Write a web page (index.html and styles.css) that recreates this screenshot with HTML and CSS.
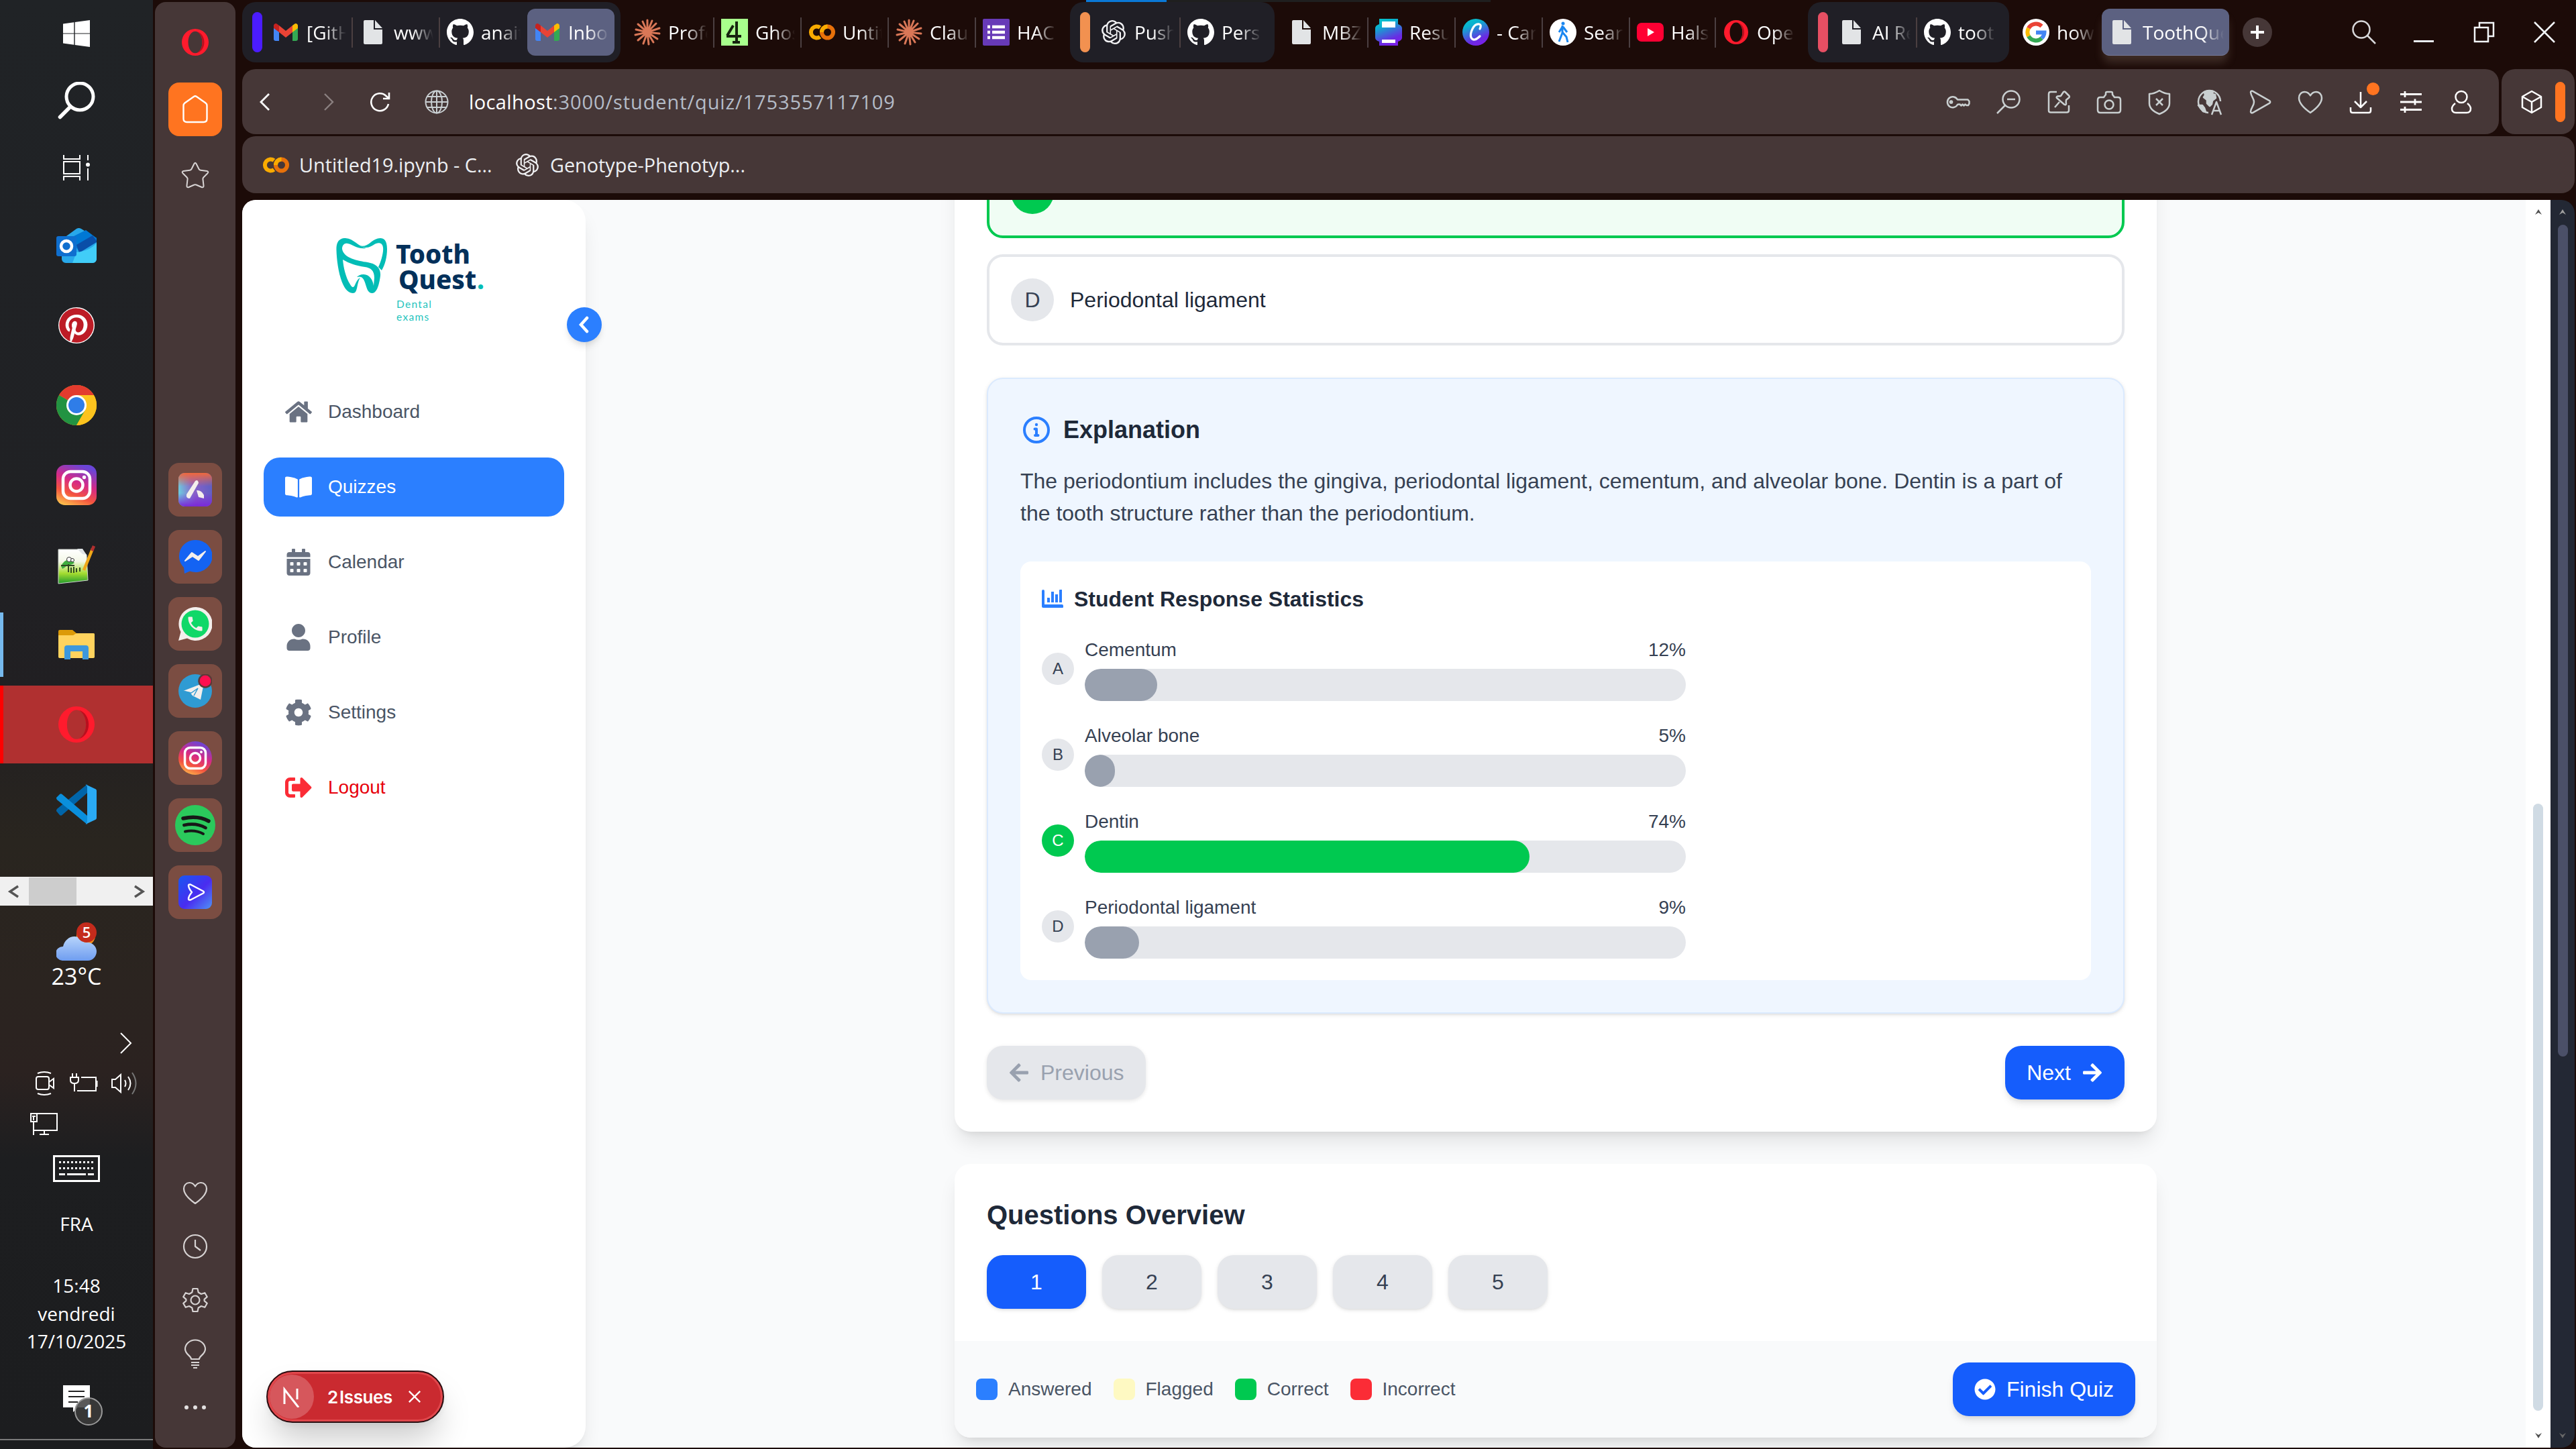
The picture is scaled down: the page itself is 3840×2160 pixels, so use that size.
FILE: index.html
```html
<!DOCTYPE html>
<html lang="en">
<head>
<meta charset="utf-8">
<title>ToothQuest</title>
<link rel="stylesheet" href="styles.css">
</head>
<body>
<svg class="defs" width="0" height="0">
  <defs>
    <linearGradient id="ig" x1="0.2" y1="1" x2="0.6" y2="0"><stop offset="0" stop-color="#fdc04c"/><stop offset=".3" stop-color="#f4543f"/><stop offset=".6" stop-color="#d62a86"/><stop offset="1" stop-color="#6a45d8"/></linearGradient>
    <linearGradient id="canva" x1=".2" y1="0" x2=".6" y2="1"><stop offset="0" stop-color="#05c3cc"/><stop offset=".25" stop-color="#0bb0cf"/><stop offset=".8" stop-color="#6a2ae4"/><stop offset="1" stop-color="#7a20e8"/></linearGradient>
    <linearGradient id="aria" x1="0" y1=".6" x2="1" y2=".4"><stop offset="0" stop-color="#6cd0e0"/><stop offset=".45" stop-color="#8a62c8"/><stop offset="1" stop-color="#5f5fc4"/></linearGradient>
    <linearGradient id="ariatop" x1=".5" y1="0" x2=".5" y2="1"><stop offset="0" stop-color="#f0683c"/><stop offset=".4" stop-color="#f0683c" stop-opacity="0"/><stop offset=".6" stop-color="#7a28d8" stop-opacity="0"/><stop offset="1" stop-color="#7a28d8"/></linearGradient>
    <linearGradient id="flow" x1="0" y1="0" x2="1" y2="1"><stop offset="0" stop-color="#1758f2"/><stop offset=".55" stop-color="#4a2cf0"/><stop offset="1" stop-color="#4f93f5"/></linearGradient>
    <linearGradient id="cloud" x1="0" y1="0" x2="0" y2="1"><stop offset="0" stop-color="#b7d4fb"/><stop offset="1" stop-color="#6f9df0"/></linearGradient>
    <linearGradient id="npp" x1="0" y1="0" x2="0" y2="1"><stop offset="0" stop-color="#fff"/><stop offset=".35" stop-color="#f4f8e8"/><stop offset=".7" stop-color="#a4dc30"/><stop offset="1" stop-color="#1f9a2c"/></linearGradient>
    <symbol id="gmail" viewBox="0 0 40 40"><path d="M2 9v21a3 3 0 0 0 3 3h5V17z" fill="#4285f4"/><path d="M38 9v21a3 3 0 0 1-3 3h-5V17z" fill="#34a853"/><path d="M30 10l3-2.3c2-1.5 5 0 5 2.600V14l-8 6z" fill="#fbbc04"/><path d="M10 20V10l10 8 10-8v10l-10 8z" fill="#ea4335"/><path d="M2 14v-3.700c0-2.600 3-4.100 5-2.600L10 10v10z" fill="#c5221f"/></symbol>
    <symbol id="doc" viewBox="0 0 40 40"><path d="M8 2h13v14h13v20a2 2 0 0 1-2 2H8a2 2 0 0 1-2-2V4a2 2 0 0 1 2-2z" fill="#e2e4e6"/><path d="M23 2l11 12H23z" fill="#e2e4e6"/></symbol>
    <symbol id="github" viewBox="0 0 16 16"><path fill="#fff" d="M8 0C3.580 0 0 3.580 0 8c0 3.540 2.290 6.530 5.470 7.590.4.070.55-.17.55-.38 0-.19-.01-.82-.01-1.490-2.010.37-2.530-.49-2.690-.94-.09-.23-.48-.94-.82-1.130-.28-.15-.68-.52-.01-.53.63-.01 1.080.58 1.230.82.72 1.210 1.870.87 2.330.66.07-.52.28-.87.51-1.070-1.780-.2-3.640-.89-3.640-3.950 0-.87.31-1.590.82-2.150-.08-.2-.36-1.020.08-2.120 0 0 .67-.21 2.200.82.64-.18 1.320-.27 2-.27.68 0 1.360.09 2 .27 1.530-1.040 2.200-.82 2.200-.82.44 1.100.16 1.920.08 2.120.51.56.82 1.270.82 2.150 0 3.070-1.870 3.750-3.650 3.950.29.25.54.73.54 1.480 0 1.070-.01 1.930-.01 2.200 0 .21.15.46.55.38A8.013 8.013 0 0 0 16 8c0-4.420-3.580-8-8-8z"/></symbol>
    <symbol id="claude" viewBox="-20 -20 40 40"><g stroke="#d97757" stroke-width="3" stroke-linecap="round"><path d="M0 0V-18M0 0L7-17M0 0L13-13M0 0L18-6M0 0L18 2M0 0L15 10M0 0L9 15M0 0L2 18M0 0L-6 17M0 0L-14 12M0 0L-18 4M0 0L-17-4M0 0L-14-12M0 0L-7-16"/></g></symbol>
    <symbol id="colab" viewBox="0 0 40 40"><circle cx="28.500" cy="20" r="8.500" fill="none" stroke="#e8710a" stroke-width="6"/><path d="M17.500 13.200A8.500 8.500 0 1 0 17.500 26.800" fill="none" stroke="#f9ab00" stroke-width="6"/><path d="M20 20a8.500 8.500 0 0 1 8.500-8.500" fill="none" stroke="#f9ab00" stroke-width="6"/></symbol>
    <symbol id="openai" viewBox="0 0 24 24"><path fill="#f1f1f3" d="M22.282 9.821a5.985 5.985 0 0 0-.516-4.911 6.046 6.046 0 0 0-6.510-2.900A6.065 6.065 0 0 0 4.981 4.182a5.985 5.985 0 0 0-3.998 2.900 6.046 6.046 0 0 0 .743 7.097 5.980 5.980 0 0 0 .511 4.911 6.051 6.051 0 0 0 6.515 2.900A5.985 5.985 0 0 0 13.260 24a6.056 6.056 0 0 0 5.772-4.206 5.989 5.989 0 0 0 3.998-2.900 6.056 6.056 0 0 0-.748-7.073zm-9.022 12.608a4.476 4.476 0 0 1-2.876-1.041l.142-.080 4.778-2.758a.795.795 0 0 0 .393-.681v-6.737l2.020 1.169a.071.071 0 0 1 .038.052v5.583a4.504 4.504 0 0 1-4.495 4.494zm-9.661-4.125a4.471 4.471 0 0 1-.535-3.014l.142.085 4.783 2.758a.771.771 0 0 0 .781 0l5.843-3.369v2.332a.080.080 0 0 1-.033.062L9.740 19.950a4.499 4.499 0 0 1-6.141-1.646zM2.341 7.896a4.485 4.485 0 0 1 2.366-1.973V11.600a.766.766 0 0 0 .388.677l5.814 3.354-2.020 1.169a.076.076 0 0 1-.071 0l-4.830-2.787A4.504 4.504 0 0 1 2.341 7.872zm16.596 3.856L13.104 8.364 15.119 7.200a.076.076 0 0 1 .071 0l4.830 2.791a4.494 4.494 0 0 1-.677 8.104v-5.677a.790.790 0 0 0-.407-.667zm2.011-3.023l-.142-.085-4.774-2.782a.776.776 0 0 0-.785 0L9.409 9.230V6.897a.066.066 0 0 1 .028-.062l4.830-2.787a4.499 4.499 0 0 1 6.680 4.660zM8.307 12.863l-2.020-1.164a.080.080 0 0 1-.038-.057V6.074a4.499 4.499 0 0 1 7.376-3.454l-.142.081L8.704 5.459a.795.795 0 0 0-.393.681zm1.098-2.365l2.602-1.500 2.607 1.500v2.999l-2.597 1.500-2.607-1.500Z"/></symbol>
    <symbol id="opera" viewBox="0 0 40 40"><path fill="#ff1b2d" fill-rule="evenodd" d="M20 0a20 20 0 1 0 0 40a20 20 0 1 0 0-40zM20 3.800c6 0 10.500 7 10.500 16.200S26 36.200 20 36.200 9.500 29.200 9.500 20 14 3.800 20 3.800z"/><path d="M23 4.300c6 1.500 10.500 7.900 10.500 15.700s-4.500 14.200-10.500 15.700c4.500-3 7.500-8.900 7.500-15.700S27.500 7.300 23 4.300z" fill="#b8101e"/></symbol>
    <symbol id="heart" viewBox="0 0 40 40"><path d="M20 36C10 29 3 22 3 14c0-5 3.500-9 8.500-9 3.500 0 6.500 2 8.500 5.500C22 7 25 5 28.500 5c5 0 8.500 4 8.500 9 0 8-7 15-17 22z"/></symbol>
    <symbol id="send" viewBox="0 0 40 40"><path d="M6 5.500c0-1.500 1.500-2.300 3-1.600L34 18.200c1.600.9 1.600 2.700 0 3.600L9 36.100c-1.500.7-3-.1-3-1.600.500-6 5-9 5-14.500S6.500 11.500 6 5.500z"/></symbol>
    <symbol id="arrow" viewBox="0 0 448 512"><path fill="currentColor" d="M257.500 445.100l-22.200 22.200c-9.400 9.400-24.600 9.400-33.900 0L7 273c-9.400-9.400-9.400-24.600 0-33.900L201.400 44.700c9.400-9.400 24.600-9.400 33.900 0l22.200 22.200c9.500 9.500 9.300 25-.4 34.300L136.600 216H424c13.300 0 24 10.700 24 24v32c0 13.300-10.700 24-24 24H136.600l120.500 114.800c9.800 9.300 10 24.800.4 34.300z"/></symbol>
  </defs>
</svg>

<aside class="taskbar">
  <div class="slot sys"><svg width="40" height="40" viewBox="0 0 40 40" fill="#fff"><path d="M0 5.500L16.300 3.200v16.200H0zM17.700 3L40 0v19.400H17.700zM0 20.600h16.300v16.200L0 34.500zM17.700 20.600H40V40l-22.300-3z"/></svg></div>
  <div class="slot sys"><svg width="56" height="56" viewBox="0 0 56 56" fill="none" stroke="#fff" stroke-linecap="round"><circle cx="33" cy="22" r="20" stroke-width="5"/><path d="M19 37L3.500 52.500" stroke-width="5.500"/></svg></div>
  <div class="slot sys"><svg width="40" height="40" viewBox="0 0 40 40" fill="none" stroke="#fff" stroke-width="2"><path d="M1 1v6h24V1M1 11h24v18H1zM1 39v-6h24v6M37 1v8M37 21v18"/><circle cx="37" cy="15.500" r="3" fill="#fff" stroke="none"/></svg></div>
  <div class="slot first"><svg width="60" height="54" viewBox="0 0 60 54"><path d="M8 18L30 2c2-1.500 5-1.500 7 0l23 14v31a6 6 0 0 1-6 6H14a6 6 0 0 1-6-6z" fill="#28a8ea"/><path d="M20 16L44 4l16 12v4L34 36z" fill="#0078d4"/><path d="M30 26l24-14 6 8v2L34 38z" fill="#0a4ea8"/><path d="M30 37c12-1 24-6 30-14v24a6 6 0 0 1-6 6H24z" fill="#41cdf8"/><rect x="0" y="13" width="30" height="30" rx="3" fill="#0f6fcf"/><circle cx="15" cy="28" r="8" fill="none" stroke="#fff" stroke-width="4.500"/></svg></div>
  <div class="slot"><svg width="54" height="54" viewBox="0 0 24 24"><circle cx="12" cy="12" r="12" fill="#fff"/><path transform="translate(.6 .6) scale(.95)" fill="#bd1c26" d="M12.017 0C5.396 0 .029 5.367.029 11.987c0 5.079 3.158 9.417 7.618 11.162-.105-.949-.199-2.403.041-3.439.219-.937 1.406-5.957 1.406-5.957s-.359-.72-.359-1.781c0-1.663.967-2.911 2.168-2.911 1.024 0 1.518.769 1.518 1.688 0 1.029-.653 2.567-.992 3.992-.285 1.193.6 2.165 1.775 2.165 2.128 0 3.768-2.245 3.768-5.487 0-2.861-2.063-4.869-5.008-4.869-3.410 0-5.409 2.562-5.409 5.199 0 1.033.394 2.143.889 2.741.099.12.112.225.085.345-.09.375-.293 1.199-.334 1.363-.053.225-.172.271-.401.165-1.495-.69-2.433-2.878-2.433-4.646 0-3.776 2.748-7.252 7.920-7.252 4.158 0 7.392 2.967 7.392 6.923 0 4.135-2.607 7.462-6.233 7.462-1.214 0-2.354-.629-2.758-1.379l-.749 2.848c-.269 1.045-1.004 2.352-1.498 3.146 1.123.345 2.306.535 3.550.535 6.607 0 11.985-5.365 11.985-11.987C23.970 5.390 18.592.026 11.985.026z"/></svg></div>
  <div class="slot"><svg width="60" height="60" viewBox="0 0 60 60"><circle cx="30" cy="30" r="30" fill="#fbbc05"/><path d="M30 30L4 15A30 30 0 0 1 56 15z" fill="#e33b2e"/><path d="M4 15A30 30 0 0 0 30 60L43 37.500 30 30z" fill="#229342"/><path d="M43 37.500L30 60A30 30 0 0 0 56 15H30z" fill="#fcc31e"/><circle cx="30" cy="30" r="15" fill="#fff"/><circle cx="30" cy="30" r="12" fill="#2f7de8"/></svg></div>
  <div class="slot"><svg width="60" height="60" viewBox="0 0 60 60"><rect width="60" height="60" rx="13" fill="url(#ig)"/><g fill="none" stroke="#fff" stroke-width="4.500"><rect x="10" y="10" width="40" height="40" rx="11"/><circle cx="30" cy="30" r="9.500"/></g><circle cx="41.500" cy="18.500" r="2.700" fill="#fff"/></svg></div>
  <div class="slot"><svg width="56" height="58" viewBox="0 0 56 58"><path d="M1 6h34l8 8 2 38-44 5z" fill="url(#npp)" stroke="#cfd6cf"/><path d="M29 5l8 8 6 1-6-9z" fill="#dfe3e6"/><path d="M5 31q5-11 14-9 4 1 6 4-6 4-10 3-4 4-8 6" fill="#3fae3f"/><circle cx="17" cy="21" r="3.500" fill="#fff" stroke="#333"/><circle cx="22" cy="22" r="2.500" fill="#fff" stroke="#333"/><path d="M5 30h20M16 28v12M20 33v8M24 32v9M28 34v6M33 33v6" stroke="#2f4a22" stroke-width="2"/><path d="M39 37L52 5" stroke="#f0a818" stroke-width="4.500"/><path d="M51 8l3-7" stroke="#b03030" stroke-width="4.500"/></svg></div>
  <div class="slot explorer"><svg width="54" height="46" viewBox="0 0 54 46"><path d="M2 1h19l6 5h25a2 2 0 0 1 2 2v34H0V3a2 2 0 0 1 2-2z" fill="#dc9a08"/><path d="M0 9h22l5-3h25a2 2 0 0 1 2 2v33a2 2 0 0 1-2 2H2a2 2 0 0 1-2-2z" fill="#ffd35e"/><path d="M9 45V28a4 4 0 0 1 4-4h28a4 4 0 0 1 4 4v17h-9V33H18v12z" fill="#3d98dd"/></svg></div>
  <div class="slot opera"><svg width="54" height="54"><use href="#opera"/></svg></div>
  <div class="slot"><svg width="60" height="60" viewBox="0 0 60 60"><path d="M0 40l5 6c1 1 2.500 1 3.500 0L46 13V0L2 36c-2 1.500-2 3-2 4z" fill="#0065a9"/><path d="M0 20l5-5c1-1 2.500-1 3.500 0L46 47v13L2 24c-2-1.500-2-3-2-4z" fill="#0a8fdc"/><path d="M43 0l15 7c1.500.700 2 1.500 2 3v40c0 1.500-.500 2.300-2 3l-15 7c2-1 3-3 3-5V5c0-2-1-4-3-5z" fill="#2aaaf4"/></svg></div>
  <div class="hscroll">
    <svg class="hs-l" width="18" height="20" viewBox="0 0 18 20"><path d="M17 2L5 10l12 8" fill="none" stroke="#555" stroke-width="3.500"/></svg>
    <div class="hs-thumb"></div>
    <svg class="hs-r" width="18" height="20" viewBox="0 0 18 20"><path d="M1 2l12 8-12 8" fill="none" stroke="#555" stroke-width="3.500"/></svg>
  </div>
  <div class="weather">
    <svg width="60" height="58" viewBox="0 0 60 58"><circle cx="44" cy="20" r="14" fill="#f28a1a"/><path d="M9 57a10.500 10.500 0 0 1 1-21c2-9 9-15 17-15 7 0 12 4 15 9 10-2 18 5 18 13 0 8-6 14-13 14z" fill="url(#cloud)"/></svg>
    <span class="w-badge">5</span>
  </div>
  <div class="temp">23°C</div>
  <div class="chev"><svg width="20" height="34" viewBox="0 0 20 34" fill="none" stroke="#fff" stroke-width="2"><path d="M2 2l15 15L2 32"/></svg></div>
  <div class="tray">
    <svg width="30" height="36" viewBox="0 0 30 36" fill="none" stroke="#fff" stroke-width="2"><path d="M4 3q10-4 20 0M4 33q10 4 20 0"/><rect x="2" y="8" width="19" height="19" rx="3"/><path d="M21 16l7-5v14l-7-5"/></svg>
    <svg width="42" height="32" viewBox="0 0 42 32" fill="none" stroke="#fff" stroke-width="2"><path d="M17 7h22v20H11M4 1v5M10 1v5M1 7h12v4q0 5-6 5t-6-5zM7 16v12"/><path d="M40 12v9" stroke-width="3"/></svg>
    <svg width="42" height="38" viewBox="0 0 42 38" fill="none" stroke="#fff" stroke-width="2"><path d="M2 13h5l8-7v26l-8-7H2zM21 14q3 5 0 10M26 9q7 10 0 20"/><path d="M32 3q11 16 0 32" stroke="#777"/></svg>
  </div>
  <div class="tray2"><svg width="42" height="34" viewBox="0 0 42 34" fill="none" stroke="#fff" stroke-width="2"><path d="M10 1h30v25H6M1 1h9v12H1zM3 5h5M5 5v6M5 13v20M21 26v6M14 32h14"/></svg></div>
  <div class="kbd"><svg width="70" height="40" viewBox="0 0 70 40" fill="none" stroke="#fff" stroke-width="3"><rect x="1.500" y="1.500" width="67" height="37"/><path d="M9 10.500h52M9 19.500h52" stroke-dasharray="3 3"/><path d="M9 28.500h9M21 28.500h28M52 28.500h9"/></svg></div>
  <div class="lang">FRA</div>
  <div class="clock">15:48<br>vendredi<br>17/10/2025</div>
  <div class="notif">
    <svg width="40" height="40" viewBox="0 0 40 40"><path d="M0 0h40v33H22l-7 7v-7H0z" fill="#fff"/><path d="M8 9h24M8 17h24M8 25h14" stroke="#222" stroke-width="2"/></svg>
    <span class="n-badge">1</span>
  </div>
  <div class="desk-line"></div>
</aside>

<aside class="opbar">
  <div class="ob-ico top"><svg width="40" height="40"><use href="#opera"/></svg></div>
  <div class="ob-btn home"><svg width="40" height="44" viewBox="0 0 40 44" fill="none" stroke="#fff" stroke-width="2.400"><path d="M2.500 16.500Q2.500 14 4.500 12.500L18 3q2-1.500 4 0l13.500 9.500q2 1.500 2 4V36q0 5-5 5h-25q-5 0-5-5z"/></svg></div>
  <div class="ob-ico star"><svg width="44" height="44" viewBox="0 0 44 44" fill="none" stroke="#d8d4d4" stroke-width="2" stroke-linejoin="round"><path d="M20.500 4q1.500-2.500 3 0l4 8q.700 1.500 2.500 1.700l9.500 1.300q3 .800 1 3.200l-6 6q-1.500 1.500-1 3.500l1 9q.200 3.500-3 2.300l-8-3.500q-1.500-.700-3 0l-8 3.500q-3.200 1.200-3-2.300l1-9q.500-2-1-3.500l-6-6q-2-2.400 1-3.200l9.500-1.300q1.800-.200 2.500-1.700z"/></svg></div>
  <div class="ob-apps">
    <div class="ob-btn"><svg width="50" height="50" viewBox="0 0 50 50"><rect width="50" height="50" rx="9" fill="url(#aria)"/><rect width="50" height="50" rx="9" fill="url(#ariatop)"/><path d="M12 32l13-20q4-3 5 3L17 38q-6 0-5-6zM27 26q7-1 11 7v5l-8-2z" fill="#f4efec"/></svg></div>
    <div class="ob-btn"><svg width="50" height="50" viewBox="0 0 50 50"><path d="M25 0a25 24 0 1 1-8 46.500L9 50l-1-9A24 24 0 0 1 25 0z" fill="#1463f3"/><path d="M10 31l10-12 9 6 11-8-10 13-9-6z" fill="#f4efec" stroke="#f4efec" stroke-width="2" stroke-linejoin="round"/></svg></div>
    <div class="ob-btn"><svg width="50" height="50" viewBox="0 0 50 50"><path d="M25 0a25 25 0 1 1-12 46.500L0 50l3.500-13A25 25 0 0 1 25 0z" fill="#f4efec"/><circle cx="25" cy="25" r="20.500" fill="#10d868"/><path transform="translate(11 11) scale(1.170)" fill="#f4efec" d="M6.620 10.790c1.440 2.830 3.760 5.140 6.590 6.590l2.200-2.200c.27-.27.67-.36 1.020-.24 1.120.37 2.330.57 3.570.57.55 0 1 .45 1 1V20c0 .55-.45 1-1 1-9.390 0-17-7.610-17-17 0-.55.45-1 1-1h3.500c.55 0 1 .45 1 1 0 1.250.2 2.450.57 3.570.11.35.03.74-.25 1.020z"/></svg></div>
    <div class="ob-btn"><svg width="50" height="50" viewBox="0 0 50 50"><circle cx="25" cy="25" r="25" fill="#2f9bd3"/><path d="M7 25l31-12-5 25-12-6-4-5z" fill="#f4efec"/><path d="M7 25l12 3 10-7-6 11" fill="none" stroke="#2f9bd3" stroke-width="1.500"/><circle cx="40" cy="10" r="9.500" fill="#ff0f50" stroke="#5d3a38" stroke-width="2.500"/></svg></div>
    <div class="ob-btn"><svg width="50" height="50" viewBox="0 0 50 50"><circle cx="25" cy="25" r="25" fill="url(#ig)"/><g fill="none" stroke="#fff" stroke-width="3.500"><rect x="9.500" y="9.500" width="31" height="31" rx="8"/><circle cx="25" cy="25" r="7.500"/></g><circle cx="34" cy="16" r="2" fill="#fff"/></svg></div>
    <div class="ob-btn"><svg width="60" height="60" viewBox="0 0 60 60"><circle cx="30" cy="30" r="30" fill="#2bc95c"/><g fill="none" stroke="#171717" stroke-linecap="round"><path d="M12 20q22-5 38 4" stroke-width="5.500"/><path d="M13.500 30q18-4 32 4" stroke-width="4.800"/><path d="M15 39.500q15-3 27 3.500" stroke-width="4"/></g></svg></div>
    <div class="ob-btn"><svg width="50" height="50" viewBox="0 0 50 50"><rect width="50" height="50" rx="9" fill="url(#flow)"/><path d="M15 15q0-2 3-1.500l19 10q2 1.500 0 3l-19 10q-3 .500-3-1.500 0-4 5-10-5-6-5-10z" fill="none" stroke="#fff" stroke-width="2.500" stroke-linejoin="round"/></svg></div>
  </div>
  <div class="ob-foot">
    <svg width="40" height="40" class="ln"><use href="#heart"/></svg>
    <svg width="40" height="40" viewBox="0 0 40 40" class="ln"><circle cx="20" cy="20" r="17"/><path d="M20 10v10l8 6"/></svg>
    <svg width="40" height="40" viewBox="0 0 40 40" class="ln"><path d="M16.500 3h7l1.200 5.500 4.300 2.500 5.300-1.800 3.500 6-4.200 3.700v2.200l4.200 3.700-3.500 6-5.300-1.800-4.300 2.500-1.200 5.500h-7l-1.200-5.500-4.300-2.500-5.300 1.800-3.500-6 4.200-3.700v-2.200l-4.200-3.700 3.500-6 5.300 1.800 4.300-2.500z"/><circle cx="20" cy="20" r="6.500"/></svg>
    <svg width="40" height="46" viewBox="0 0 40 46" class="ln"><path d="M14 31c0-5-9-7-9-15a15 13.500 0 0 1 30 0c0 8-9 10-9 15zM14 36h12M14 40h12M17 44h6"/></svg>
    <svg width="40" height="40" viewBox="0 0 40 40" fill="#e3e0e0"><circle cx="7" cy="20" r="3"/><circle cx="20" cy="20" r="3"/><circle cx="33" cy="20" r="3"/></svg>
  </div>
</aside>

<main class="browser">
  <div class="tabs">
    <div class="group">
      <i class="gbar purple"></i>
      <div class="tab"><svg><use href="#gmail"/></svg><span>[GitH</span></div>
      <div class="tab"><svg><use href="#doc"/></svg><span>www</span></div>
      <div class="tab nodiv"><svg><use href="#github"/></svg><span>anait</span></div>
      <div class="tab active"><svg><use href="#gmail"/></svg><span>Inbo</span></div>
    </div>
    <div class="plain">
      <div class="tab"><svg><use href="#claude"/></svg><span>Profe</span></div>
      <div class="tab"><svg viewBox="0 0 40 40"><rect width="40" height="40" fill="#a8ff8c"/><path d="M8 26h22M18 10L9 25M23 4v31M17 35h11" stroke="#16240f" stroke-width="4" fill="none"/></svg><span>Ghos</span></div>
      <div class="tab"><svg><use href="#colab"/></svg><span>Untit</span></div>
      <div class="tab"><svg><use href="#claude"/></svg><span>Clau</span></div>
      <div class="tab nodiv"><svg viewBox="0 0 40 40"><rect width="40" height="40" rx="2" fill="#673ab7"/><path d="M14 12h19M14 20h19M14 28h19" stroke="#fff" stroke-width="4.500"/><path d="M7 12h4M7 20h4M7 28h4" stroke="#fff" stroke-width="4.500"/></svg><span>HAC</span></div>
    </div>
    <div class="group">
      <i class="gbar orange"></i>
      <div class="tab"><svg class="sm"><use href="#openai"/></svg><span>Push</span></div>
      <div class="tab nodiv"><svg><use href="#github"/></svg><span>Perso</span></div>
    </div>
    <div class="plain">
      <div class="tab"><svg><use href="#doc"/></svg><span>MBZ</span></div>
      <div class="tab"><svg viewBox="0 0 40 40"><path d="M6 0h28v8q6 2 6 6v14q0 4-6 6v6H6v-6q-6-2-6-6V14q0-4 6-6z" fill="url(#canva)"/><rect x="10" y="4" width="20" height="9" fill="#fff"/><rect x="10" y="31" width="20" height="5" fill="#fff"/></svg><span>Resu</span></div>
      <div class="tab"><svg viewBox="0 0 40 40"><circle cx="20" cy="20" r="20" fill="url(#canva)"/><path d="M26 15q3-6-1-7-6-1-10 7t-2 13q4 7 13-2" fill="none" stroke="#fff" stroke-width="3.200" stroke-linecap="round"/></svg><span>- Can</span></div>
      <div class="tab"><svg viewBox="0 0 40 40"><circle cx="20" cy="20" r="20" fill="#fff"/><circle cx="20" cy="7" r="2.500" fill="#1a86f0"/><path d="M19 10v11l-5 13M19 20l6 7 2 8M19 12l-5 8M20 12l6 8" stroke="#1a86f0" stroke-width="3" fill="none"/></svg><span>Sear</span></div>
      <div class="tab t128"><svg viewBox="0 0 40 40"><rect y="6" width="40" height="28" rx="7" fill="#ff0033"/><path d="M16 14l10 6-10 6z" fill="#fff"/></svg><span>Hals</span></div>
      <div class="tab nodiv t127"><svg class="sm"><use href="#opera"/></svg><span>Ope</span></div>
    </div>
    <div class="group">
      <i class="gbar pink"></i>
      <div class="tab t128"><svg><use href="#doc"/></svg><span>AI Re</span></div>
      <div class="tab nodiv t127"><svg><use href="#github"/></svg><span>toot</span></div>
    </div>
    <div class="plain">
      <div class="tab nodiv t128"><svg viewBox="0 0 40 40"><circle cx="20" cy="20" r="20" fill="#fff"/><g fill="none" stroke-width="6"><path d="M28.500 11A12.500 12.500 0 0 0 9 14" stroke="#ea4335"/><path d="M9 14a12.500 12.500 0 0 0 0 12" stroke="#fbbc05"/><path d="M9 26a12.500 12.500 0 0 0 19.500 3" stroke="#34a853"/><path d="M28.500 29q4-4 4-8.500H20" stroke="#4285f4"/></g></svg><span>how</span></div>
    </div>
    <div class="tab active wide"><svg><use href="#doc"/></svg><span>ToothQue</span></div>
    <div class="plus"><svg width="20" height="20" viewBox="0 0 20 20" stroke="#fff" stroke-width="4"><path d="M10 0v20M0 10h20"/></svg></div>
    <div class="wctl">
      <div><svg width="38" height="38" viewBox="0 0 38 38" fill="none" stroke="#d8d8da" stroke-width="2.500"><circle cx="16" cy="15" r="12.500"/><path d="M25 24l12 12"/></svg></div>
      <div class="min"><svg width="30" height="3"><rect width="30" height="3" fill="#e8ecf0"/></svg></div>
      <div><svg width="32" height="32" viewBox="0 0 32 32" fill="none" stroke="#f2f5f8" stroke-width="2.500"><path d="M2 9h20v21H2z"/><path d="M9 9V2h21v20h-8"/></svg></div>
      <div><svg width="32" height="32" viewBox="0 0 32 32" fill="none" stroke="#f2f5f8" stroke-width="2.500"><path d="M1 1l30 30M31 1L1 31"/></svg></div>
    </div>
  </div>

  <div class="addr-row">
    <div class="addr">
      <div class="nav b1"><svg width="16" height="28" viewBox="0 0 16 28" fill="none" stroke="#fff" stroke-width="2.800"><path d="M14 2L2 14l12 12"/></svg></div>
      <div class="nav b2"><svg width="16" height="28" viewBox="0 0 16 28" fill="none" stroke="#8b8080" stroke-width="2.400"><path d="M2 2l12 12L2 26"/></svg></div>
      <div class="nav b3"><svg width="32" height="32" viewBox="0 0 32 32" fill="none" stroke="#fff" stroke-width="2.600"><path d="M28 19A13 13 0 1 1 24.500 7L28 10"/><path d="M29 2v9h-9"/></svg></div>
      <div class="nav b4"><svg width="36" height="36" viewBox="0 0 36 36" fill="none" stroke="#c9cfd2" stroke-width="2"><circle cx="18" cy="18" r="16.500"/><ellipse cx="18" cy="18" rx="8" ry="16.500"/><path d="M18 1.500v33M1.500 18h33M4 10h28M4 26h28"/></svg></div>
      <div class="url"><b>localhost</b>:3000/student/quiz/1753557117109</div>
      <div class="acts">
        <div><svg viewBox="0 0 40 40" class="lg"><path d="M19 16.500A8 8 0 1 0 19 24l1.500-.500h2l2 2 2-2 2 2 2-2 2 1.500h2.500l1.500-2.500v-3.500l-2-2.500z"/><circle cx="9.500" cy="20" r="1.600"/></svg></div>
        <div><svg viewBox="0 0 40 40" class="lg"><circle cx="24" cy="16" r="12.500"/><path d="M15 25L3 37M18 16h12"/></svg></div>
        <div><svg viewBox="0 0 40 40" class="lg"><path d="M17 5H8Q5 5 5 8v25q0 2.500 3 2.500h24q3 0 3-3V25"/><path d="M27 5q1.500-1 2.500 0l6 6q1 1.200 0 2.300L31 17q-.500 3 0 6-.500 2-2.500 1L17 14q-1-1.500 1-2.500 3 0 5-.500zM21 20l-7 8"/></svg></div>
        <div><svg viewBox="0 0 40 40" class="lg"><path d="M7 13h5l3-4V7q0-2 2-2h6q2 0 2 2v2l3 4h5q4 0 4 4v15q0 4-4 4H7q-4 0-4-4V17q0-4 4-4z"/><circle cx="20" cy="24" r="6.500"/></svg></div>
        <div><svg viewBox="0 0 40 40" class="lg"><path d="M20 3q8 5 15 5v14q0 10-15 16Q5 32 5 22V8q7 0 15-5zM15 15l10 10M25 15L15 25"/></svg></div>
        <div><svg viewBox="0 0 40 40" class="lg"><path d="M18 36A16.500 16.500 0 1 1 36 19"/><path d="M12 5q7-3 13-1l-1 4 4 1 1 5-5 4-1 5-3 3-4-4v-5l-5-4 2-3zM3 25h6l3 4 2 6-4-1z" fill="#c9cfd0"/><path d="M23 39l7-19 7 19M25.500 33h9"/></svg></div>
        <div><svg class="lg"><use href="#send"/></svg></div>
        <div><svg class="lg"><use href="#heart"/></svg></div>
        <div class="dl"><svg viewBox="0 0 40 40" class="lg w"><path d="M20 5v22M11 19l9 9 9-9M5 28v5q0 3 3 3h24q3 0 3-3v-5"/></svg><i class="dot"></i></div>
        <div><svg viewBox="0 0 40 40" class="lg w"><path d="M4 8.500h32M4 20h32M4 31.500h32M11 4v9M26 15.500v9M11 27v9" stroke-width="2.800"/></svg></div>
        <div><svg viewBox="0 0 40 40" class="lg w"><circle cx="20" cy="12.500" r="8.500"/><path d="M11 22q-5 4-5 8 0 6 6 6h16q6 0 6-6 0-4-5-8"/></svg></div>
      </div>
    </div>
    <div class="sidebtn"><svg width="34" height="36" viewBox="0 0 34 36" fill="none" stroke="#fff" stroke-width="2.500" stroke-linejoin="round"><path d="M17 2l14 8v16l-14 8-14-8V10zM3 10l14 8 14-8M17 18v16"/></svg><i></i></div>
  </div>

  <div class="bookmarks">
    <svg width="40" height="40"><use href="#colab"/></svg><span class="bk1">Untitled19.ipynb - C...</span>
    <svg width="34" height="34"><use href="#openai"/></svg><span class="bk2">Genotype-Phenotyp...</span>
  </div>

  <div class="viewport">
    <div class="page">
      <nav class="side">
        <div class="logo">
          <svg width="80" height="86" viewBox="0 0 80 86" fill="#03bdb6"><path d="M46 17C33 14 28 3 15 2 5 2 1 8 1.500 20 2 40 8 84 26 84c8 0 5-14 11-23-4 2-6 6-8 11-2 5-5 3-7-1C15 60 12 45 11 34c10 6 20 9 33 11 8 1 14 5 14 16l-1 12c-1-8-6-17-15-17-5 0-8 2-10 4 6-2 10 1 12 8 3 9 4 16 11 16 8 0 11-18 12-26C68 46 60 40 48 38 34 36 12 32 10 18c0-6 4-9 8-8 8 1 14 9 28 7z"/><path d="M36 13c6 2 11 0 17-5 6-5 24-14 24 10 0 12-3 24-8 32l-5-5c4-8 8-22 7-29-1-8-8-8-14-4-6 4-12 6-21 1z"/></svg>
          <div class="brand"><div class="l1">Tooth</div><div class="l2">Quest<em>.</em></div><div class="l3"><div>Dental</div><div>exams</div></div></div>
        </div>
        <a class="item"><svg viewBox="0 0 576 512"><path d="M280.370 148.260L96 300.110V464a16 16 0 0 0 16 16l112.060-.29a16 16 0 0 0 15.920-16V368a16 16 0 0 1 16-16h64a16 16 0 0 1 16 16v95.640a16 16 0 0 0 16 16.050L464 480a16 16 0 0 0 16-16V300L295.670 148.260a12.190 12.190 0 0 0-15.300 0zM571.600 251.470L488 182.560V44.050a12 12 0 0 0-12-12h-56a12 12 0 0 0-12 12v72.610L318.470 43a48 48 0 0 0-61 0L4.340 251.470a12 12 0 0 0-1.600 16.900l25.500 31A12 12 0 0 0 45.150 301l235.220-193.740a12.190 12.190 0 0 1 15.300 0L530.900 301a12 12 0 0 0 16.900-1.600l25.500-31a12 12 0 0 0-1.700-16.930z"/></svg>Dashboard</a>
        <a class="item on"><svg viewBox="0 0 576 512"><path d="M542.220 32.050c-54.800 3.110-163.720 14.430-230.960 55.590-4.640 2.840-7.270 7.890-7.270 13.170v363.870c0 11.550 12.630 18.850 23.280 13.490 69.180-34.820 169.230-44.320 218.700-46.920 16.890-.89 30.020-14.430 30.020-30.660V62.750c.01-17.710-15.350-31.740-33.770-30.700zM264.730 87.640C197.500 46.480 88.580 35.170 33.780 32.050 15.360 31.010 0 45.040 0 62.750V400.600c0 16.240 13.130 29.780 30.020 30.660 49.490 2.600 149.590 12.110 218.770 46.950 10.620 5.350 23.210-1.940 23.210-13.460V100.630c0-5.290-2.620-10.140-7.270-12.990z"/></svg>Quizzes</a>
        <a class="item"><svg viewBox="0 0 448 512"><path fill-rule="evenodd" d="M0 464c0 26.500 21.500 48 48 48h352c26.500 0 48-21.500 48-48V192H0zM320 268q0-12 12-12h40q12 0 12 12v40q0 12-12 12h-40q-12 0-12-12zM320 396q0-12 12-12h40q12 0 12 12v40q0 12-12 12h-40q-12 0-12-12zM192 268q0-12 12-12h40q12 0 12 12v40q0 12-12 12h-40q-12 0-12-12zM192 396q0-12 12-12h40q12 0 12 12v40q0 12-12 12h-40q-12 0-12-12zM64 268q0-12 12-12h40q12 0 12 12v40q0 12-12 12H76q-12 0-12-12zM64 396q0-12 12-12h40q12 0 12 12v40q0 12-12 12H76q-12 0-12-12zM400 64h-48V16c0-8.800-7.200-16-16-16h-32c-8.800 0-16 7.200-16 16v48H160V16c0-8.800-7.200-16-16-16h-32c-8.800 0-16 7.200-16 16v48H48C21.500 64 0 85.500 0 112v48h448v-48c0-26.500-21.500-48-48-48z"/></svg>Calendar</a>
        <a class="item"><svg viewBox="0 0 448 512"><path d="M224 256c70.700 0 128-57.300 128-128S294.700 0 224 0 96 57.300 96 128s57.300 128 128 128zm89.600 32h-16.700c-22.200 10.200-46.900 16-72.900 16s-50.600-5.800-72.900-16h-16.700C60.200 288 0 348.200 0 422.400V464c0 26.500 21.500 48 48 48h352c26.500 0 48-21.500 48-48v-41.600c0-74.200-60.200-134.400-134.400-134.400z"/></svg>Profile</a>
        <a class="item"><svg viewBox="0 0 512 512"><path d="M487.400 315.700l-42.600-24.600c4.300-23.200 4.300-47 0-70.200l42.600-24.600c4.900-2.800 7.100-8.600 5.500-14-11.100-35.600-30-67.800-54.700-94.600-3.800-4.100-10-5.100-14.800-2.300L380.800 110c-17.900-15.400-38.500-27.300-60.800-35.100V25.800c0-5.600-3.900-10.500-9.400-11.700-36.700-8.200-74.300-7.800-109.200 0-5.500 1.200-9.400 6.100-9.400 11.700V75c-22.200 7.900-42.800 19.800-60.800 35.100L88.700 85.500c-4.900-2.800-11-1.900-14.800 2.300-24.700 26.700-43.600 58.900-54.700 94.600-1.700 5.400.6 11.200 5.500 14L67.300 221c-4.300 23.200-4.300 47 0 70.200l-42.600 24.600c-4.900 2.800-7.100 8.600-5.500 14 11.100 35.600 30 67.800 54.700 94.600 3.800 4.100 10 5.100 14.800 2.300l42.600-24.600c17.900 15.400 38.500 27.300 60.800 35.100v49.200c0 5.600 3.900 10.500 9.400 11.700 36.700 8.200 74.300 7.800 109.200 0 5.500-1.200 9.400-6.100 9.400-11.700v-49.200c22.200-7.900 42.800-19.800 60.800-35.100l42.600 24.600c4.900 2.800 11 1.900 14.800-2.300 24.700-26.700 43.600-58.900 54.700-94.600 1.500-5.500-.7-11.300-5.600-14.100zM256 336c-44.100 0-80-35.900-80-80s35.900-80 80-80 80 35.900 80 80-35.900 80-80 80z"/></svg>Settings</a>
        <a class="item out"><svg viewBox="0 0 512 512"><path d="M497 273L329 441c-15 15-41 4.500-41-17v-96H152c-13.300 0-24-10.700-24-24v-96c0-13.300 10.700-24 24-24h136V88c0-21.400 25.900-32 41-17l168 168c9.300 9.400 9.300 24.600 0 34zM192 436v-40c0-6.600-5.400-12-12-12H96c-17.700 0-32-14.300-32-32V160c0-17.700 14.300-32 32-32h84c6.600 0 12-5.400 12-12V76c0-6.600-5.400-12-12-12H96c-53 0-96 43-96 96v192c0 53 43 96 96 96h84c6.600 0 12-5.400 12-12z"/></svg>Logout</a>
        <button class="toggle"><svg width="18" height="26" viewBox="0 0 18 26" fill="none" stroke="#fff" stroke-width="4.500" stroke-linecap="round" stroke-linejoin="miter"><path d="M13 3L4 13l9 10"/></svg></button>
        <div class="issues"><span class="nx"><svg width="30" height="32" viewBox="0 0 30 32" fill="none" stroke="#fff" stroke-width="3"><path d="M4 27V5l21 27M23 4v16"/></svg></span><span class="it">2 Issues</span><svg width="20" height="20" viewBox="0 0 22 22" stroke="#fff" stroke-width="2.600"><path d="M2 2l18 18M20 2L2 20"/></svg></div>
      </nav>

      <section class="content">
        <div class="card quiz">
          <div class="opt right"><span class="badge green"></span></div>
          <div class="opt"><span class="badge">D</span>Periodontal ligament</div>
          <div class="expl">
            <h3><svg width="44" height="44" viewBox="0 0 44 44" fill="none" stroke="#2b7fff"><circle cx="22" cy="22" r="18" stroke-width="4"/><path d="M19.500 20.500H22V30M20 30h4.500" stroke-width="4" stroke-linecap="round" stroke-linejoin="round"/><circle cx="22" cy="14" r="2.200" fill="#2b7fff" stroke="none"/></svg>Explanation</h3>
            <p>The periodontium includes the gingiva, periodontal ligament, cementum, and alveolar bone. Dentin is a part of the tooth structure rather than the periodontium.</p>
            <div class="stats">
              <h4><svg width="32" height="28" viewBox="0 0 32 28" fill="#2b7fff"><path d="M0 2q0-2 2-2t2 2v20h26q2 0 2 2v2q0 1-1 1H2q-2 0-2-2zM8 12h3q1 0 1 1v6H8zM14 3h4v16h-4zM20 7h4v12h-4zM26 1q0-1 1-1h3v19h-4z"/></svg>Student Response Statistics</h4>
              <div class="row"><span class="mini">A</span><div class="bar"><div class="lab"><span>Cementum</span><span>12%</span></div><div class="track"><i style="width:12%"></i></div></div></div>
              <div class="row"><span class="mini">B</span><div class="bar"><div class="lab"><span>Alveolar bone</span><span>5%</span></div><div class="track"><i style="width:5%"></i></div></div></div>
              <div class="row ok"><span class="mini">C</span><div class="bar"><div class="lab"><span>Dentin</span><span>74%</span></div><div class="track"><i style="width:74%"></i></div></div></div>
              <div class="row"><span class="mini">D</span><div class="bar"><div class="lab"><span>Periodontal ligament</span><span>9%</span></div><div class="track"><i style="width:9%"></i></div></div></div>
            </div>
          </div>
          <div class="btns">
            <button class="btn prev"><svg width="32" height="32"><use href="#arrow"/></svg>Previous</button>
            <button class="btn next">Next<svg class="flip" width="32" height="32"><use href="#arrow"/></svg></button>
          </div>
        </div>

        <div class="card over">
          <div class="over-top">
            <h2>Questions Overview</h2>
            <div class="nums"><button class="cur">1</button><button>2</button><button>3</button><button>4</button><button>5</button></div>
          </div>
          <div class="over-foot">
            <div class="legend">
              <span><i class="c-a"></i>Answered</span><span><i class="c-f"></i>Flagged</span><span><i class="c-c"></i>Correct</span><span><i class="c-i"></i>Incorrect</span>
            </div>
            <button class="btn next fin"><svg width="32" height="32" viewBox="0 0 512 512"><path fill="#fff" d="M504 256c0 136.967-111.033 248-248 248S8 392.967 8 256 119.033 8 256 8s248 111.033 248 248zM227.314 387.314l184-184c6.248-6.248 6.248-16.379 0-22.627l-22.627-22.627c-6.248-6.249-16.379-6.249-22.628 0L216 308.118l-70.059-70.059c-6.248-6.248-16.379-6.248-22.628 0l-22.627 22.627c-6.248 6.248-6.248 16.379 0 22.627l104 104c6.249 6.249 16.379 6.249 22.628.001z"/></svg>Finish Quiz</button>
          </div>
        </div>
      </section>
    </div>
    <div class="sb light"><svg width="12" height="10" viewBox="0 0 12 10"><path d="M1 9l5-8 5 8-5-3z" fill="#505050"/></svg><i></i><svg width="12" height="10" viewBox="0 0 12 10"><path d="M1 1l5 8 5-8-5 3z" fill="#505050"/></svg></div>
    <div class="sb dark"><svg width="12" height="10" viewBox="0 0 12 10"><path d="M1 9l5-8 5 8-5-3z" fill="#a0a0a0"/></svg><i></i><svg width="12" height="10" viewBox="0 0 12 10"><path d="M1 1l5 8 5-8-5 3z" fill="#686868"/></svg></div>
  </div>
</main>
</body>
</html>
```
FILE: styles.css
```css
* { box-sizing: border-box; }
body {
  margin: 0; width: 3840px; height: 2160px; overflow: hidden;
  display: flex; background: #1c0b08;
  font-family: "Liberation Sans", Arial, sans-serif;
}
svg { display: block; flex: none; }
button { border: 0; font: inherit; padding: 0; }
h2, h3, h4, p { margin: 0; }
.defs { position: absolute; }

/* Windows taskbar */
.taskbar {
  width: 228px; height: 2160px; flex: none;
  display: flex; flex-direction: column; align-items: center;
  background: linear-gradient(#202326 0, #202124 35%, #211f22 48%, #29251f 58%, #2b2420 68%, #2b2220 74%, #1d1e20 80%, #1c1d1f 100%);
  color: #fff; font-family: "Open Sans", "Noto Sans", sans-serif; font-size: 29px; text-align: center;
}
.slot { width: 228px; height: 119px; display: flex; align-items: center; justify-content: center; flex: none; }
.slot.sys { height: 100px; }
.slot.first { margin-top: 6px; }
.slot.explorer { background: linear-gradient(#76b9ed, #76b9ed) 0 50% / 5px 96px no-repeat; }
.slot.opera { height: 116px; margin: 2px 0 1px; background: #b03030; border-left: 5px solid #f00; padding-right: 5px; }
.hscroll { width: 228px; height: 43px; margin-top: 49px; flex: none; background: #f0f0f0; display: flex; align-items: center; }
.hs-l { margin: 0 15px 0 10px; }
.hs-thumb { width: 71px; height: 41px; background: #cdcdcd; }
.hs-r { margin-left: 86px; }
.weather { position: relative; width: 60px; height: 58px; margin-top: 25px; flex: none; }
.w-badge {
  position: absolute; left: 30px; top: 0; width: 30px; height: 30px; border-radius: 50%;
  background: #c42b1c; font-size: 22px; font-weight: 600; line-height: 29px;
}
.temp { height: 44px; line-height: 44px; margin-top: 0; font-size: 34px; }
.chev { width: 228px; padding-left: 178px; margin-top: 61px; }
.tray { width: 228px; height: 38px; margin-top: 24px; padding-left: 52px; display: flex; align-items: center; gap: 22px; }
.tray svg:nth-child(3) { margin-left: -3px; }
.tray2 { width: 228px; padding-left: 45px; margin-top: 25px; }
.kbd { margin-top: 29px; }
.lang { height: 40px; line-height: 40px; margin-top: 42px; font-size: 28px; }
.clock { line-height: 41.5px; margin-top: 52px; font-size: 28px; }
.notif { position: relative; width: 40px; height: 40px; margin-top: 44px; }
.n-badge {
  position: absolute; left: 17px; top: 18px; width: 42px; height: 42px; border-radius: 50%;
  border: 2px solid #9a9a9a; background: rgba(60,60,60,.85); font-size: 26px; font-weight: 700; line-height: 37px;
}
.desk-line { width: 228px; height: 2px; background: #7a7a7a; margin-top: 40px; }

/* Opera sidebar */
.opbar { width: 120px; height: 2155px; margin: 3px 0 0 3px; flex: none; border-radius: 16px; background: #463737; display: flex; flex-direction: column; align-items: center; }
.ob-ico.top { margin-top: 40px; }
.ob-btn { width: 80px; height: 80px; border-radius: 16px; background: #7b4d42; display: flex; align-items: center; justify-content: center; flex: none; }
.ob-btn.home { background: #ff7420; margin-top: 40px; }
.ob-ico.star { margin-top: 37px; }
.ob-apps { margin-top: 406px; display: flex; flex-direction: column; gap: 20px; }
.ob-foot { margin-top: 388px; display: flex; flex-direction: column; gap: 40px; }
.ob-foot svg:nth-child(4) { margin: -3px 0; }
.ln { fill: none; stroke: #d6d2d2; stroke-width: 2.2; stroke-linejoin: round; }

/* Browser chrome */
.browser { width: 3477px; margin-left: 10px; display: flex; flex-direction: column; font-family: "Open Sans", "Noto Sans", sans-serif; }
.tabs {
  height: 103px; padding: 3px 0 10px; flex: none; display: flex; align-items: center; color: #fff; font-size: 28px;
  background:
    linear-gradient(#0a78d7, #0a78d7) 1258px 0 / 120px 3px no-repeat,
    linear-gradient(#1f1f1f, #1f1f1f) 1378px 0 / 483px 3px no-repeat;
}
.group { height: 90px; border-radius: 20px; background: #201f26; display: flex; align-items: center; padding: 0 9px 0 15px; }
.group ~ .group { padding-right: 10px; }
.plain { display: flex; align-items: center; margin: 0 10px; }
.gbar { width: 15px; height: 60px; border-radius: 8px; margin-right: 5px; flex: none; }
.purple { background: #4b1cff; } .orange { background: #f29150; } .pink { background: #e64f63; }
.tab { width: 130px; height: 45px; padding-left: 10px; display: flex; align-items: center; flex: none; border-right: 2px solid #4b3f41; }
.tab.nodiv { border-right-color: transparent; }
.tab svg { width: 40px; height: 40px; margin-right: 11px; }
.tab svg.sm { width: 36px; height: 36px; margin: 0 13px 0 2px; }
.tab span { flex: 1; min-width: 0; margin-right: 8px; overflow: hidden; white-space: nowrap; line-height: 42px; -webkit-mask-image: linear-gradient(90deg, #000 calc(100% - 32px), transparent); mask-image: linear-gradient(90deg, #000 calc(100% - 32px), transparent); }
.tab.active { height: 70px; border: 0; border-radius: 12px; background: #5c6181; }
.tab.wide { width: 190px; margin-left: -10px; box-shadow: 0 12px 14px -2px rgba(190,170,150,.22); border-bottom: 1px solid #767a98; }
.t128 { width: 128px; } .t127 { width: 127px; }
.plus { width: 44px; height: 44px; margin-left: 20px; border-radius: 50%; background: #463737; display: flex; align-items: center; justify-content: center; }
.wctl { margin-left: auto; display: flex; }
.wctl div { width: 90px; height: 90px; display: flex; align-items: center; justify-content: center; }
.wctl .min { align-items: flex-end; padding-bottom: 30px; }

.addr-row { height: 97px; flex: none; display: flex; gap: 4px; }
.addr { width: 3364px; border-radius: 20px; background: #463737; display: flex; align-items: center; padding: 0 19px 0 14px; }
.nav { width: 40px; display: flex; justify-content: center; }
.b2 { margin-left: 55px; } .b3 { margin-left: 37px; } .b4 { margin-left: 44px; }
.url { margin-left: 28px; font-size: 29px; letter-spacing: .9px; color: #b4bcc8; flex: 1; white-space: nowrap; }
.url b { font-weight: 400; color: #fff; letter-spacing: .4px; }
.acts { display: flex; }
.acts div { width: 75px; display: flex; justify-content: center; }
.lg { width: 40px; height: 40px; fill: none; stroke: #c9cfd0; stroke-width: 2.5; stroke-linejoin: round; }
.lg.w { stroke: #fff; }
.acts .dl { position: relative; }
.dot { position: absolute; left: 47px; top: -9px; width: 19px; height: 19px; border-radius: 50%; background: #ff7420; }
.sidebtn { width: 109px; border-radius: 20px; background: #463737; display: flex; align-items: center; padding-left: 28px; }
.sidebtn i { width: 15px; height: 60px; border-radius: 8px; background: #ff7420; margin-left: 18px; }
.bookmarks { height: 85px; margin-top: 3px; flex: none; border-radius: 20px; background: #463737; display: flex; align-items: center; padding-left: 30px; color: #eceff2; font-size: 28.8px; white-space: nowrap; }
.bk1 { margin-left: 15px; width: 290px; }
.bk2 { margin-left: 17px; }
.bookmarks svg + span + svg { margin-left: 33px; }

/* Page viewport */
.viewport { height: 1860px; margin-top: 10px; display: flex; border-radius: 20px; overflow: hidden; font-family: "Liberation Sans", Arial, sans-serif; }
.page { width: 3404px; display: flex; background: #f9fafb; overflow: hidden; }
.side { position: relative; z-index: 2; width: 512px; height: 1860px; flex: none; background: #fff; border-radius: 20px 32px 32px 20px; box-shadow: 0 20px 30px -6px rgba(0,0,0,.1), 0 8px 12px -8px rgba(0,0,0,.1); padding: 0 32px; display: flex; flex-direction: column; }
.logo { height: 272px; display: flex; padding: 55px 0 0 107px; flex: none; }
.brand { margin-left: 10px; font-family: "Noto Sans", sans-serif; font-weight: 800; font-size: 38.5px; color: #03305a; line-height: 38px; padding-top: 6px; }
.l2 { margin-left: 4px; }
.l2 em { color: #03bdb6; font-style: normal; margin-left: 1px; }
.l3 { margin: 9px 0 0 1px; font-family: Lato, sans-serif; font-weight: 400; font-size: 15.5px; letter-spacing: 1.3px; line-height: 19px; color: #1fc4be; }
.item { height: 88px; margin-bottom: 24px; border-radius: 24px; padding-left: 32px; display: flex; align-items: center; gap: 24px; font-size: 28px; color: #4a5565; flex: none; }
.item svg { width: 40px; height: 40px; fill: #6a7282; }
.item.on { background: #2b7fff; color: #fff; } .item.on svg { fill: #fff; }
.item.out { color: #e7000b; } .item.out svg { fill: #fb2c36; }
.toggle { position: absolute; left: 484px; top: 160px; width: 52px; height: 52px; border-radius: 50%; background: #2b7fff; display: flex; align-items: center; justify-content: center; box-shadow: 0 8px 12px -2px rgba(0,0,0,.1), 0 4px 8px -4px rgba(0,0,0,.1); }
.issues { position: absolute; left: 36px; top: 1745px; width: 265px; height: 78px; border-radius: 39px; background: #ca2a30; border: 2px solid #2a0d10; box-shadow: inset 0 0 0 3px #e0474c, 0 30px 50px -8px rgba(0,0,0,.22), 0 4px 8px rgba(0,0,0,.06); color: #fff; display: flex; align-items: center; padding-left: 3px; font-family: Inter, sans-serif; font-size: 26px; font-weight: 600; }
.nx { width: 66px; height: 66px; border-radius: 50%; background: #d6575c; display: flex; align-items: center; justify-content: center; }
.it { width: 120px; margin-left: 20px; letter-spacing: -.4px; word-spacing: -4px; }

.content { flex: 1; padding: 0 550px 15px; display: flex; flex-direction: column; justify-content: flex-end; }
.card { width: 1792px; flex: none; background: #fff; border-radius: 24px; box-shadow: 0 20px 30px -6px rgba(0,0,0,.1), 0 8px 12px -8px rgba(0,0,0,.1); }
.quiz { padding: 48px; margin-bottom: 48px; }
.opt { height: 136px; margin-bottom: 24px; border: 4px solid #e5e7eb; border-radius: 24px; padding-left: 32px; display: flex; align-items: center; gap: 24px; font-size: 32px; color: #1e2939; }
.opt.right { border-color: #00c950; background: #f0fdf4; }
.badge { width: 64px; height: 64px; border-radius: 50%; background: #e5e7eb; color: #364153; display: flex; align-items: center; justify-content: center; }
.badge.green { background: #00c950; }
.expl { margin-top: 48px; padding: 48px; border: 2px solid #dbeafe; border-radius: 24px; background: #eff6ff; box-shadow: 0 2px 6px rgba(0,0,0,.1), 0 2px 4px -2px rgba(0,0,0,.1); }
.expl h3 { height: 56px; display: flex; align-items: center; gap: 18px; padding-left: 2px; font-size: 36px; color: #1e2939; margin-bottom: 24px; }
.expl p { font-size: 32px; line-height: 48px; color: #364153; margin-bottom: 48px; }
.stats { background: #fff; border-radius: 16px; padding: 32px; }
.stats h4 { height: 48px; display: flex; align-items: center; gap: 16px; font-size: 32px; color: #1e2939; }
.row { display: flex; align-items: center; gap: 16px; margin-top: 32px; }
.mini { width: 48px; height: 48px; border-radius: 50%; background: #e5e7eb; color: #364153; font-size: 24px; display: flex; align-items: center; justify-content: center; }
.bar { width: 896px; }
.lab { height: 40px; line-height: 40px; margin-bottom: 8px; display: flex; justify-content: space-between; font-size: 28px; color: #364153; }
.track { height: 48px; border-radius: 24px; background: #e5e7eb; overflow: hidden; }
.track i { display: block; height: 48px; border-radius: 24px; background: #99a1af; }
.ok .mini { background: #00c950; color: #fff; } .ok .track i { background: #00c950; }
.btns { margin-top: 48px; display: flex; justify-content: space-between; }
.btn { height: 80px; padding: 0 32px; border-radius: 24px; display: flex; align-items: center; gap: 16px; font-size: 32px; }
.prev { background: #e5e7eb; color: #99a1af; box-shadow: 0 2px 6px rgba(0,0,0,.1); }
.next { background: #155dfc; color: #fff; box-shadow: 0 8px 12px -2px rgba(0,0,0,.1), 0 4px 8px -4px rgba(0,0,0,.1); }
.flip { transform: scaleX(-1); }
.over { overflow: hidden; overflow: clip; }
.over-top { height: 264px; padding: 48px; }
.over-top h2 { font-size: 40px; line-height: 56px; color: #1e2939; margin-bottom: 32px; }
.nums { display: flex; gap: 24px; }
.nums button { width: 148px; height: 80px; border-radius: 24px; background: #e5e7eb; color: #364153; font-size: 32px; box-shadow: 0 2px 6px rgba(0,0,0,.1), 0 2px 4px -2px rgba(0,0,0,.1); }
.nums .cur { background: #155dfc; color: #fff; }
.over-foot { height: 144px; padding: 32px; background: #f9fafb; display: flex; align-items: center; justify-content: space-between; }
.legend { display: flex; gap: 32px; font-size: 28px; color: #4a5565; }
.legend span { display: flex; align-items: center; gap: 16px; }
.legend i { width: 32px; height: 32px; border-radius: 8px; }
.c-a { background: #2b7fff; } .c-f { background: #fef9c2; } .c-c { background: #00c950; } .c-i { background: #fb2c36; }

/* Scrollbars */
.sb { display: flex; flex-direction: column; align-items: center; padding: 13px 0; }
.sb i { width: 15px; border-radius: 8px; }
.sb svg:last-child { margin-top: auto; }
.light { width: 37px; background: #fff; } .light i { height: 905px; margin-top: 877px; background: #d0dbe4; }
.dark { width: 36px; background: #232834; } .dark i { height: 1240px; margin-top: 14px; background: #4b5068; }
```
